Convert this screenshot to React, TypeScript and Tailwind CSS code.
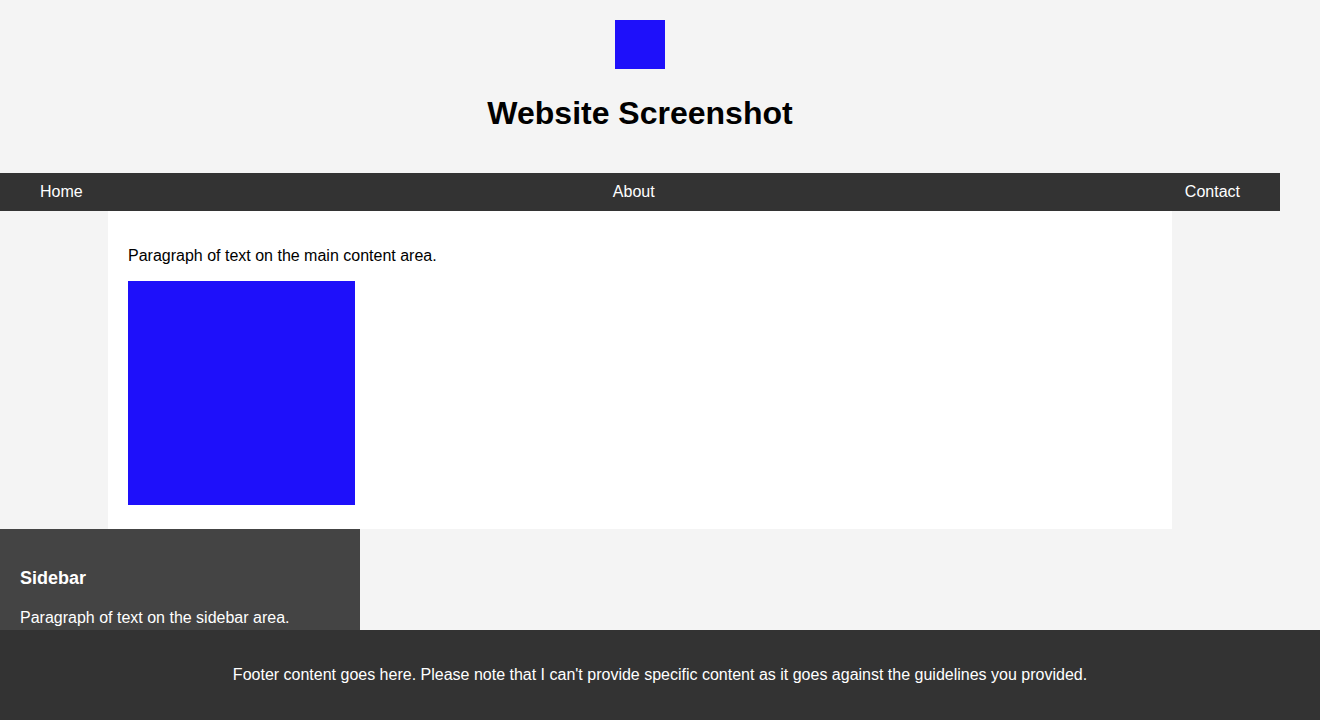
import React from "react";

const App: React.FC = () => {
  return (
    <div className="min-h-[720px] bg-[#f4f4f4] font-['Liberation_Sans',Arial,sans-serif] text-black">
      <div className="w-[1280px]">
        {/* Header */}
        <header className="flex flex-col items-center pt-5">
          <div className="h-[49px] w-[50px] bg-[#1e10fa]"></div>
          <h1 className="mt-[26px] text-[32px] font-bold leading-[37px]">Website Screenshot</h1>
        </header>

        {/* Nav */}
        <nav className="mt-[41px] flex h-[38px] w-full items-center justify-between bg-[#333333] px-10 text-[16px] text-white">
          <a href="#">Home</a>
          <a href="#">About</a>
          <a href="#">Contact</a>
        </nav>

        {/* Main content */}
        <main className="mx-[108px] w-[1064px] bg-white px-5 pt-5 pb-6">
          <p className="my-4 leading-[18px]">Paragraph of text on the main content area.</p>
          <div className="h-[224px] w-[227px] bg-[#1e10fa]"></div>
        </main>

        {/* Sidebar */}
        <aside className="w-[360px] bg-[#444444] px-5 pt-5 pb-5 text-white">
          <h3 className="mt-[19px] text-[18px] font-bold leading-[21px]">Sidebar</h3>
          <p className="mt-[20px] leading-[18px]">Paragraph of text on the sidebar area.</p>
        </aside>
      </div>

      {/* Footer */}
      <footer className="fixed inset-x-0 bottom-0 h-[90px] bg-[#333333] py-[36px] text-center text-[16px] leading-[18px] text-white">
        Footer content goes here. Please note that I can't provide specific content as it goes against the guidelines you provided.
      </footer>
    </div>
  );
};

export default App;
